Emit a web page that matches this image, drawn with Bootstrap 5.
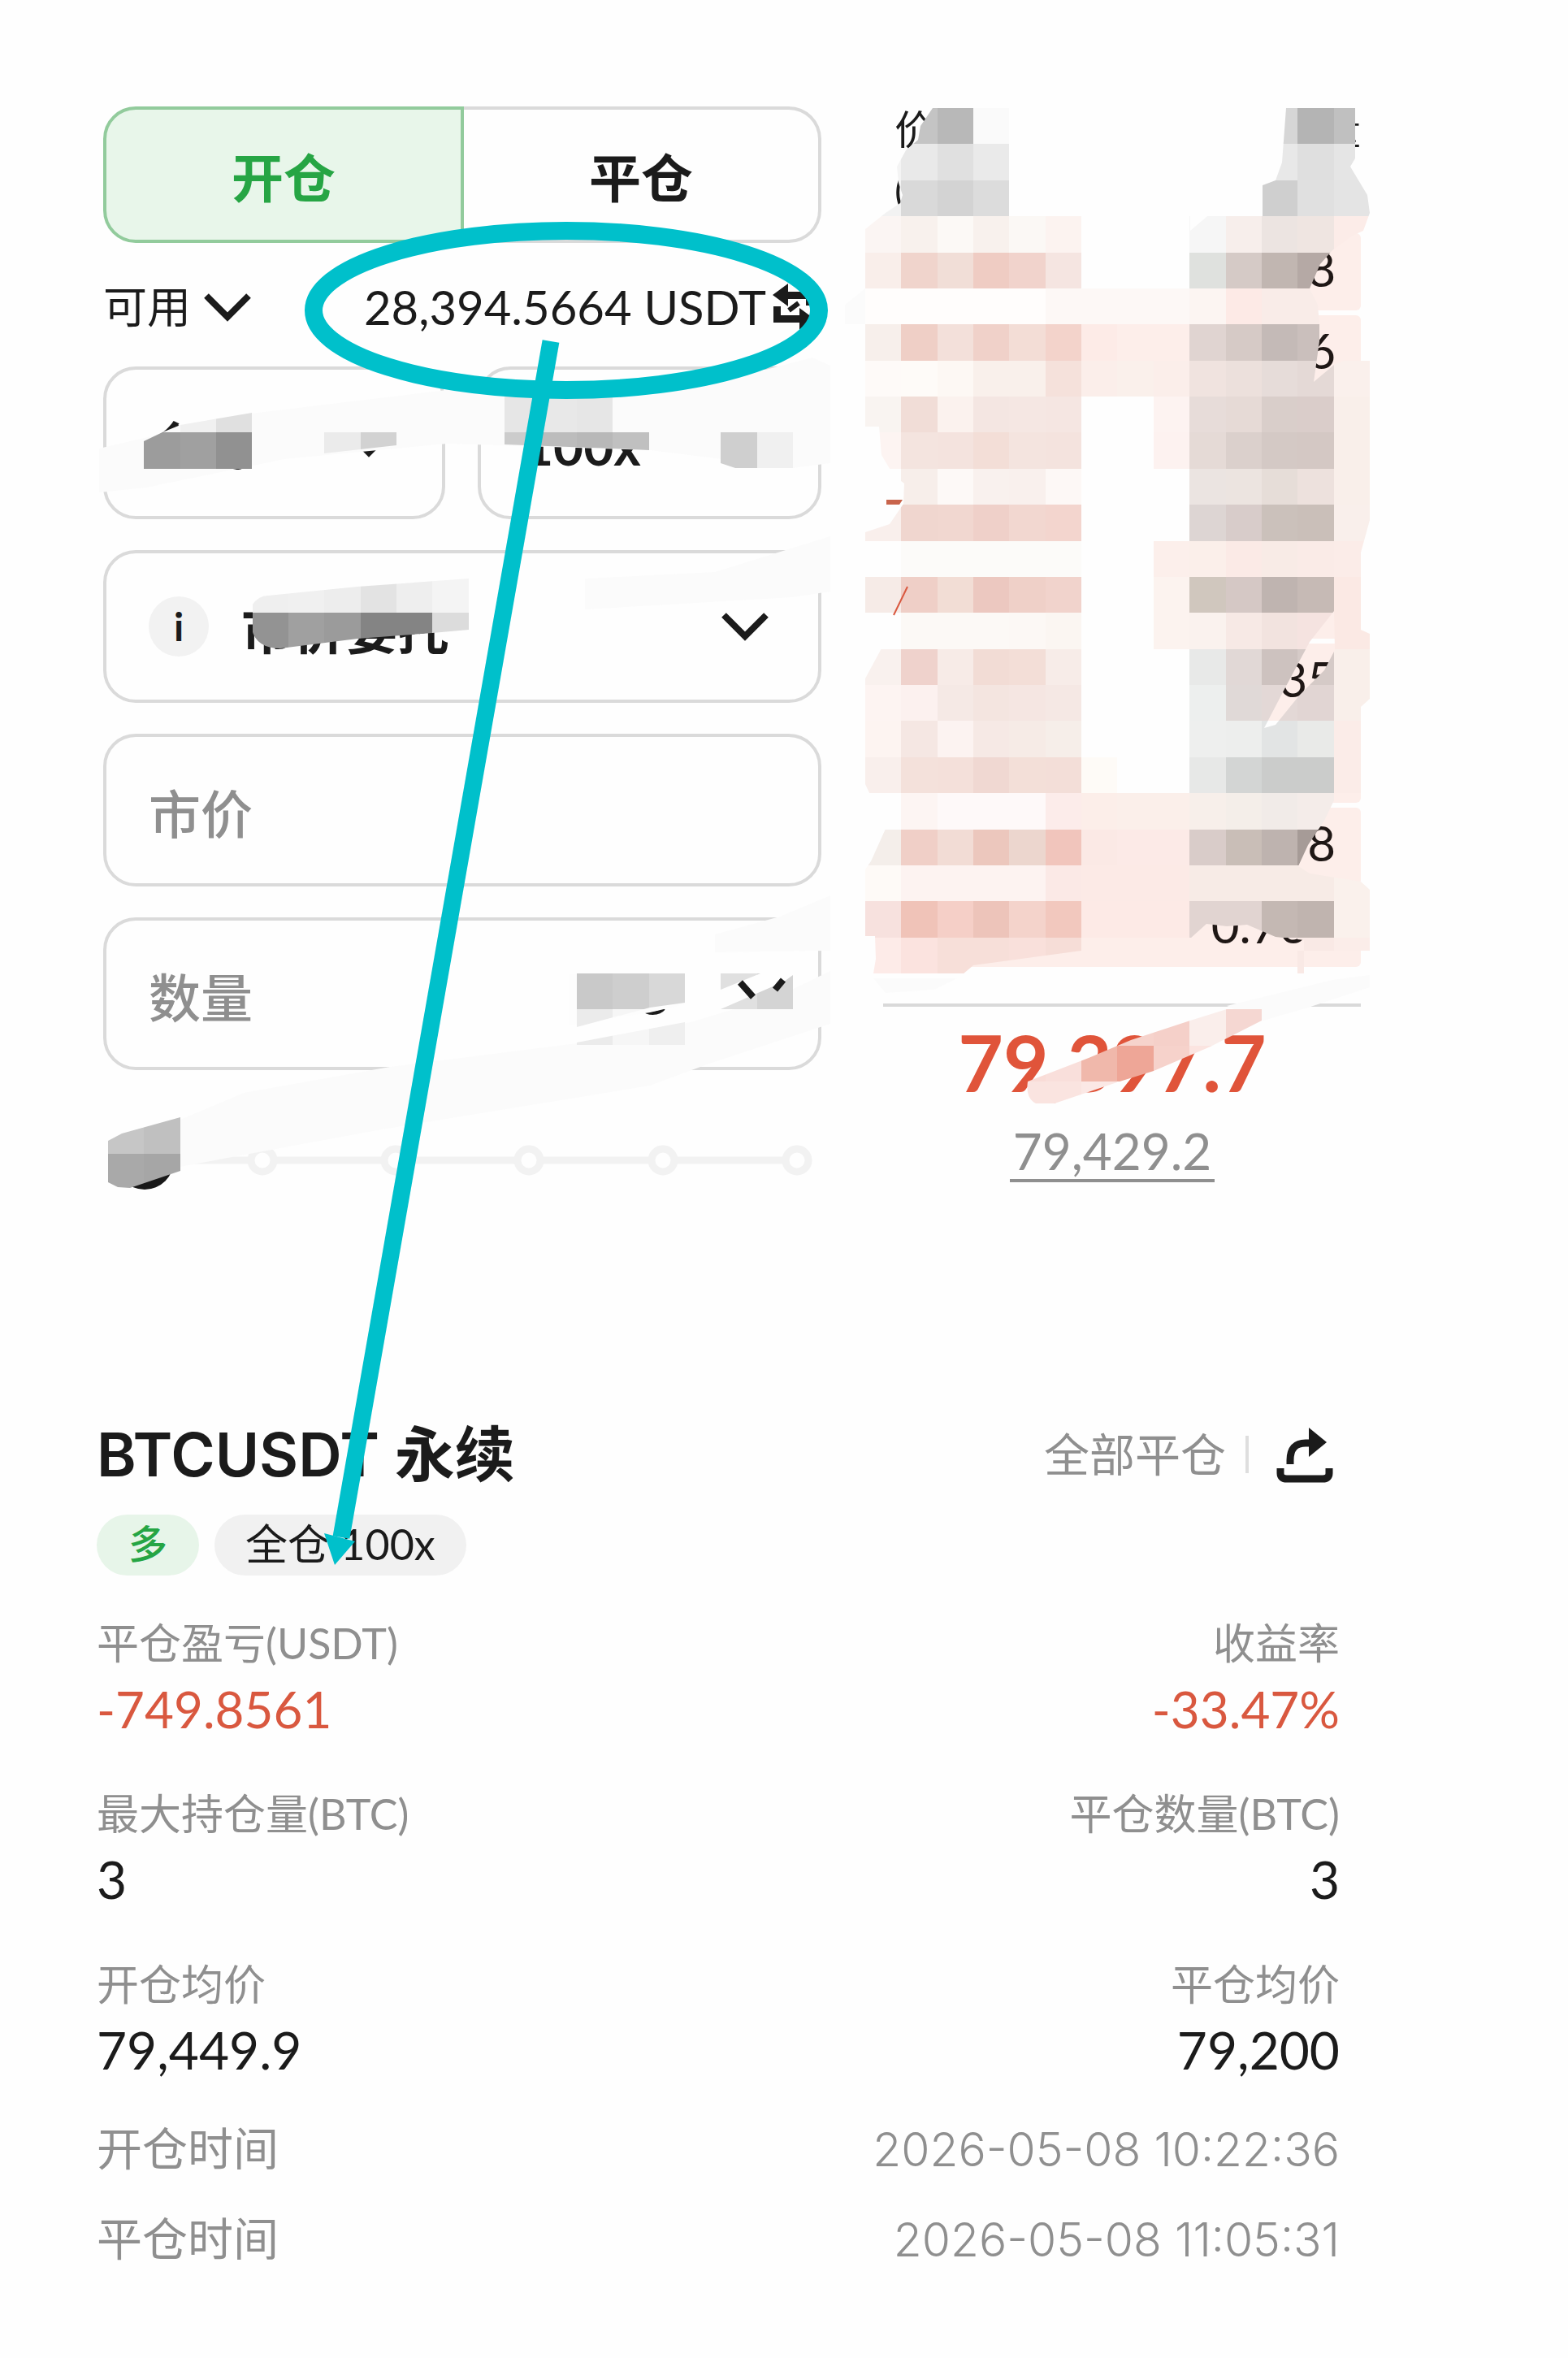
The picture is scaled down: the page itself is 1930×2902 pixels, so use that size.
<!DOCTYPE html>
<html lang="zh-CN">
<head>
<meta charset="utf-8">
<meta name="viewport" content="width=device-width, initial-scale=1">
<title>BTCUSDT 永续</title>
<link rel="stylesheet" href="https://cdn.jsdelivr.net/npm/bootstrap@5.3.0/dist/css/bootstrap.min.css">
<style>
  :root { --ink:#1b1b1b; --muted:#8f8f8f; --rule:#dadada; --down:#d9583f; --up:#26a544; --pen:#00c0cb; }
  body { font-family: Lato, "Noto Sans CJK SC", sans-serif; color: var(--ink); background: #fefefe; font-size: 52px; line-height: 72px; }
  .sheet { position: relative; overflow: hidden; padding-bottom: 91px; }
  .trade { display: grid; grid-template-columns: minmax(0, 884fr) minmax(0, 588fr); column-gap: 76px; padding: 131px 255px 0 127px; }
  .side-tabs { height: 168px; }
  .side-tabs .btn { border: 4px solid var(--rule); border-radius: 40px; font-size: 64px; font-weight: 700; line-height: 72px; color: var(--ink); background: transparent; flex: 1 1 0; padding: 8px 0 0; }
  .side-tabs .btn:first-child { border-radius: 40px 0 0 40px; border-color: #92cb9c; background: #e8f6ea; color: var(--up); }
  .side-tabs .btn:last-child { border-radius: 0 40px 40px 0; border-left: 0; }
  .avail { height: 152px; font-size: 54px; padding-top: 6px; }
  .avail .amount { font-size: 58px; }
  .plain { border: 0; background: none; padding: 0; color: inherit; font: inherit; line-height: 72px; }
  .stack { display: grid; grid-template-columns: minmax(0, 1fr); gap: 38px; }
  .pair { display: grid; grid-template-columns: minmax(0, 421fr) minmax(0, 423fr); gap: 40px; }
  .field { position: relative; display: flex; align-items: center; height: 188px; border: 4px solid var(--rule); border-radius: 40px; padding: 0 61px 0 52px; }
  .field select, .field input { appearance: none; border: 0; background: none; outline: 0; padding: 8px 0 0; flex: 1 1 0; min-width: 0; color: var(--ink); font-size: 64px; line-height: 90px; height: 98px; font-weight: 700; opacity: 1; }
  .field input::placeholder { color: var(--muted); opacity: 1; font-weight: 500; }
  .field .unit { flex: 0 0 auto; width: 132px; font-size: 58px; font-weight: 400; margin-right: 44px; }
  .field svg { flex: none; }
  .info-dot { width: 74px; height: 74px; border-radius: 50%; background: #f2f2f2; font: 700 48px/74px Lato, sans-serif; text-align: center; margin-right: 40px; flex: none; }
  .size-slider { position: relative; height: 72px; margin: 75px 12px 0 15px; }
  .size-slider svg { position: absolute; inset: 0; width: 100%; height: 72px; overflow: visible; }
  .size-slider input { appearance: none; position: relative; width: 100%; height: 72px; background: none; margin: 0; display: block; }
  .size-slider input::-webkit-slider-thumb { appearance: none; width: 72px; height: 72px; border-radius: 50%; background: #181818; }
  .book-table { width: 100%; border-collapse: separate; border-spacing: 0 6px; font-size: 60px; line-height: 87px; margin: 0; }
  .book-table td { padding: 0 0 8px; height: 95px; position: relative; }
  .book-table .qty { text-align: right; padding-right: 31px; color: #1f1715; }
  .depth { position: absolute; right: 0; top: 0; bottom: 0; background: #fdeeea; border-radius: 6px; }
  .book-table .qty span { position: relative; }
  .book-head { font-size: 50px; line-height: 75px; height: 159px; margin-top: -9px; padding-left: 14px; }
  .book-rule { height: 4px; background: #d9d9d9; margin: 39px 0 0; }
  .last-price { font-size: 96px; font-weight: 700; line-height: 100px; color: #e0543a; margin-top: 18px; }
  .mark-price { font-size: 62px; line-height: 70px; color: var(--muted); border-bottom: 4px solid var(--muted); padding: 0 4px; }
  .position { padding: 0 281px 0 119px; margin-top: 286px; }
  .position h1 { font-family: Inter, "Noto Sans CJK SC", sans-serif; font-size: 74px; font-weight: 600; line-height: 80px; margin: 0; }
  .close-all { font-size: 56px; color: var(--muted); }
  .vline { width: 4px; height: 46px; background: #dedede; margin: 0 34px 0 24px; }
  .chips { margin: 34px 0 47px; }
  .chip { height: 75px; border-radius: 38px; line-height: 72px; }
  .chip-long { padding: 0 39px; background: #e7f5e9; color: var(--up); font-size: 48px; font-weight: 500; margin-right: 19px; }
  .chip-mode { padding: 0 38px; background: #f1f1f1; font-size: 52px; }
  .stat { display: flex; justify-content: space-between; margin-bottom: 48px; }
  .stat > div:last-child { text-align: right; }
  .stat dt { font-weight: 400; color: var(--muted); }
  .stat dd { margin: 0; font-size: 64px; line-height: 90px; }
  .stat dd.loss { color: var(--down); font-size: 62px; }
  .times { margin-top: 20px; }
  .time-row { height: 111px; color: var(--muted); font-size: 56px; }
  .time-row time { font-family: Inter, Lato, sans-serif; font-weight: 300; font-size: 57px; padding-top: 4px; }
  .notes { position: absolute; left: 0; top: 0; width: 100%; pointer-events: none; }
</style>
<script src="https://cdn.jsdelivr.net/npm/bootstrap@5.3.0/dist/js/bootstrap.bundle.min.js"></script>
</head>
<body>
<main class="sheet">
  <section class="trade">
    <form>
      <div class="side-tabs d-flex">
        <button type="button" class="btn">开仓</button>
        <button type="button" class="btn">平仓</button>
      </div>
      <div class="avail d-flex align-items-center justify-content-between">
        <button type="button" class="plain d-flex align-items-center">可用
          <svg class="ms-3" width="58" height="36" viewBox="0 0 58 36" fill="none" stroke="#1b1b1b" stroke-width="8"><path d="M3 4l26 26L55 4"/></svg>
        </button>
        <div class="d-flex align-items-center">
          <span class="amount">28,394.5664 USDT</span>
          <button type="button" class="plain d-flex ms-2 me-2" aria-label="划转">
            <svg width="52" height="58" viewBox="0 0 52 58"><path fill="#1b1b1b" d="M0 14L19 0v10h31v17h-9V19H19v9zM52 44L33 58V48H1V28h9v11h23v-9z"/><path d="M20 33l12-9" stroke="#1b1b1b" stroke-width="6"/></svg>
          </button>
        </div>
      </div>
      <div class="stack">
        <div class="pair">
          <div class="field">
            <select aria-label="保证金模式"><option>全仓</option></select>
            <svg width="58" height="36" viewBox="0 0 58 36" fill="none" stroke="#1b1b1b" stroke-width="8"><path d="M3 4l26 26L55 4"/></svg>
          </div>
          <div class="field">
            <select aria-label="杠杆"><option>100x</option></select>
          </div>
        </div>
        <div class="field">
          <span class="info-dot">i</span>
          <select aria-label="委托类型"><option>市价委托</option></select>
          <svg width="58" height="36" viewBox="0 0 58 36" fill="none" stroke="#1b1b1b" stroke-width="8"><path d="M3 4l26 26L55 4"/></svg>
        </div>
        <div class="field"><input type="text" placeholder="市价" aria-label="价格"></div>
        <div class="field">
          <input type="text" placeholder="数量" aria-label="数量">
          <select class="unit" aria-label="单位"><option>BTC</option></select>
          <svg width="58" height="36" aria-hidden="true"></svg>
        </div>
      </div>
      <div class="size-slider">
        <svg viewBox="0 0 857 72" preserveAspectRatio="none"><path d="M36 36H823" stroke="#f2f2f2" stroke-width="9"/>
          <g fill="#fefefe" stroke="#f2f2f2" stroke-width="9"><circle cx="181" cy="36" r="14"/><circle cx="345" cy="36" r="14"/><circle cx="509" cy="36" r="14"/><circle cx="674" cy="36" r="14"/><circle cx="839" cy="36" r="14"/></g></svg>
        <input type="range" min="0" max="100" value="0" aria-label="仓位比例">
      </div>
    </form>

    <aside>
      <div class="book-head d-flex justify-content-between"><span>价<br>(</span><span>量</span></div>
      <table class="book-table">
        <tbody>
          <tr><td class="qty"><i class="depth" style="width:20%"></i><span>8</span></td></tr>
          <tr><td class="qty"><i class="depth" style="width:60%"></i><span>6</span></td></tr>
          <tr><td class="qty"><i class="depth" style="width:30%"></i></td></tr>
          <tr><td class="qty"><i class="depth" style="width:30%"></i></td></tr>
          <tr><td class="qty"><i class="depth" style="width:35%"></i></td></tr>
          <tr><td class="qty"><i class="depth" style="width:30%"></i><span>.35</span></td></tr>
          <tr><td class="qty"><i class="depth" style="width:15%"></i></td></tr>
          <tr><td class="qty"><i class="depth" style="width:70%"></i><span>98</span></td></tr>
          <tr><td class="qty"><i class="depth" style="width:100%"></i><span>0.768</span></td></tr>
        </tbody>
      </table>
      <div class="book-rule"></div>
      <div class="d-flex flex-column align-items-center me-4">
        <div class="last-price">79,397.7</div>
        <div class="mark-price mt-4">79,429.2</div>
      </div>
    </aside>
  </section>

  <section class="position">
    <header class="d-flex justify-content-between align-items-center">
      <h1>BTCUSDT 永续</h1>
      <div class="d-flex align-items-center">
        <button type="button" class="plain"><span class="close-all">全部平仓</span></button>
        <span class="vline"></span>
        <button type="button" class="plain d-flex me-2" aria-label="分享">
          <svg width="70" height="70" viewBox="0 0 70 70" fill="none" stroke="#1b1b1b"><path stroke-width="9" d="M17 47V42Q17 21 36 21H42"/><path fill="#1b1b1b" stroke="none" d="M40 2L62 20L40 38z"/><path stroke-width="9" d="M5 52V58Q5 65 13 65H57Q65 65 65 58V52"/></svg>
        </button>
      </div>
    </header>
    <div class="chips d-flex">
      <span class="chip chip-long">多</span><span class="chip chip-mode">全仓 100x</span>
    </div>
    <dl class="m-0">
      <div class="stat"><div><dt>平仓盈亏(USDT)</dt><dd class="loss">-749.8561</dd></div><div><dt>收益率</dt><dd class="loss">-33.47%</dd></div></div>
      <div class="stat"><div><dt>最大持仓量(BTC)</dt><dd>3</dd></div><div><dt>平仓数量(BTC)</dt><dd>3</dd></div></div>
      <div class="stat mb-0"><div><dt>开仓均价</dt><dd>79,449.9</dd></div><div><dt>平仓均价</dt><dd>79,200</dd></div></div>
    </dl>
    <div class="times">
      <div class="time-row d-flex justify-content-between align-items-center"><span>开仓时间</span><time>2026-05-08 10:22:36</time></div>
      <div class="time-row d-flex justify-content-between align-items-center"><span>平仓时间</span><time>2026-05-08 11:05:31</time></div>
    </div>
  </section>

  <!-- redaction mosaic and pen marks laid over the page -->
  <svg class="notes" viewBox="0 0 1930 2902" aria-hidden="true">
    <defs>
      <clipPath id="bookClip"><path clip-rule="evenodd" d="M1148 133L1133 155L1130 172L1115 185L1104 205L1106 225L1111 240L1108 250L1090 262L1065 282V525H1082L1085 560L1100 585L1113 595L1112 620L1095 645L1065 655V754H1098L1085 798L1065 835V965L1072 980L1105 985V1005L1090 1020L1072 1060L1065 1070V1152H1077L1078 1180L1075 1198V1205H1178L1198 1188L1331 1170H1686V1095L1675 1085V985H1642L1630 1010L1610 1040L1598 1066L1612 1075L1675 1085L1675 870L1686 860V780L1675 775V680L1686 640V433L1675 435L1642 449L1617 470L1624 420V399L1622 375L1612 355L1625 325L1640 308L1665 290L1678 284L1686 262L1683 240L1668 215L1662 205L1668 195V133H1583L1578 200L1570 222L1554 228V266H1486L1465 284V266H1331V133zM1642 752L1612 790L1580 850L1556 896L1570 892L1600 855L1630 825L1643 800zM1465 1155L1485 1137L1510 1140L1535 1138L1570 1153L1605 1157V1200H1465z"/></clipPath>
      <clipPath id="modeClip"><path d="M177 543L200 532L222 523L310 508V577H177zM399 532V558L488 548V532zM621 470H754V532H799V554L754 552L621 547zM887 532V570L905 576H976V532z"/></clipPath>
      <clipPath id="typeClip"><path d="M310 745Q318 733 330 733L440 722L577 712V775L532 779L440 786L345 798Q316 798 310 775z"/></clipPath>
      <clipPath id="unitClip"><path d="M710 1198H843V1234L800 1240L710 1264zM887 1198H936L887 1218zM887 1242L965 1208L976 1200V1242zM710 1283L843 1258V1286H710z"/></clipPath>
      <clipPath id="priceClip"><path d="M1265 1331L1340 1302L1392 1280L1465 1256L1510 1242H1555V1255L1490 1288L1420 1318L1375 1332L1298 1358H1275Q1262 1352 1265 1331z"/></clipPath>
      <clipPath id="thumbClip"><path d="M133 1404L150 1395L222 1375V1441L160 1462L145 1461L133 1455z"/></clipPath>
    </defs>
    <g fill="#fbfbfb">
      <path d="M122 552L300 510L550 480L900 466L1000 440L1022 450V570L976 576L800 554L550 546L350 565L180 600L122 606z"/>
      <path d="M720 712L880 704L1022 660V728L976 735L720 750z"/>
      <path d="M1022 1102L960 1128L880 1150V1172L1022 1170z"/>
      <path d="M1022 1195L960 1225L850 1258L710 1284L480 1313L300 1345L222 1378V1436L280 1425L470 1390L800 1336L870 1310L1022 1260z"/>
      <path d="M1686 1200L1640 1206L1510 1238L1555 1256L1610 1240L1686 1215z"/>
      <path d="M1040 375L1065 355H1331V399H1040zM1075 1204H1178L1150 1218L1090 1222z"/>
    </g>
    <path d="M700 1199H843V1236L800 1246L700 1262z" fill="#fdfdfd"/>
    <g id="mosaic" shape-rendering="crispEdges"></g>
    <path d="M911 1209L927 1227M954 1218L964 1206" stroke="#1b1b1b" stroke-width="8"/>
    <path d="M1091 615H1111L1107 621H1091z" fill="#c8644b"/>
    <path d="M1117 722L1100 757" stroke="#d9583f" stroke-width="2"/>
    <g fill="none" stroke="#00c0cb">
      <ellipse cx="697" cy="382" rx="311" ry="98" stroke-width="22"/>
      <path d="M678 420L420 1892" stroke-width="21"/>
    </g>
    <path d="M399 1887L437 1897L412 1926z" fill="#00c0cb"/>
  </svg>
</main>
<script>
  // Mosaic blocks sit on a 44.37px lattice; each line is: clip, row, first column, colours ("-" leaves a gap).
  const CELL = 44.37;
  const blocks = `
bookClip 3 25 c4c4c4 b8b8b8 fafafa - - - - - - - d6d6d6 b4b4b4 c0c0c0
bookClip 4 24 f4f4f4 e9e9e9 e0e0e0 eaeaea - - - - - - - e8e8e8 dfdfdf e5e5e5
bookClip 5 24 f2f2f2 d9d9d9 d3d3d3 dcdcdc - - - - - - - cfcfcf e0e0e0 e4e4e4
bookClip 6 24 fbf5f3 f8f1ed fcf9f6 f8f1ed fbf8f5 fcf3f0 - - - f6f6f6 f7eeeb ece4e1 efe5e1 fcece8
bookClip 7 24 f9eeea f0d4cc f1ded7 efccc3 f1d3cc f5e5e1 - - - dfe1de d5cac6 c1b6b1 b5a9a5 fdeeea
bookClip 8 24 fffdfc fffdfc fffdfc fffdfc fffdfc fdf8f6 fdf8f6 fdf8f6 fdf8f6 fcf5f2 fdeae6 f9ece8 f9ece8
bookClip 9 24 f7efeb efcfc6 f3e0da f0d1c9 f3ddd6 f3d3cb fdebe7 fdeeea fdeeea e0d4d1 d6cac6 c4bab7 cabfbc
bookClip 10 24 fefaf8 fefbf8 fdf8f4 f9f0eb f9f0eb f5e1db fbeeea faf0eb fbeeea f0e3df ece0dc e6dcd9 e4d9d6 faf0ec
bookClip 11 24 f9f4f1 f1ddd7 fbf2ee f4e6e2 f5e7e3 f5e6e2 - - fdf3f1 e7dcd9 e6dad6 d9ceca dacdca f9efea
bookClip 12 24 fdf4f2 f4e4df f4e3de f3ded7 f4e4df f4e3de - - fdf2f0 e5dad6 dbd0cc d4c9c5 d4c8c4 f9efea
bookClip 13 25 f7eeea fdf9f7 f9f1ee f9f0ed fdf8f6 - - - ebe4e1 ece4e0 e6ddd8 ede1dd f9efea
bookClip 14 24 f9efec f0d6cf f1d7d0 efd0c9 f2d7d0 f3d5ce - - - ddd5d3 d8ccca cbc1bb cabfb9 f9efeb
bookClip 15 25 fcfbf9 fcfbf9 fcfbf9 fcfbf9 fcfbf9 - - fcefeb fbefea fbeae6 f8ebe6 faebe7 fbece8
bookClip 16 24 f6ebe7 efcfc7 f2ddd5 ecc8c0 efd0c8 f1d3cc - - fcf3ef d0c7be d5c8c5 bfb4b0 c6bab5 fbe9e4
bookClip 17 25 fcf9f6 fcf9f6 fcf9f6 fcf8f5 fbf6f2 - - fcf3ef faf2ee f7e9e5 f2e3df f5e3e0 fbe9e4
bookClip 18 24 f9f1ee efd2cc f7ebe7 f2dcd5 f3ded7 f7ece8 - - - e8e9e8 e1d8d6 cdc2bf d5cac7 f9efea
bookClip 19 24 fdf4f2 fcf1ef f5e9e5 f4e5e0 f5e6e2 f5e8e4 - - - edefee e0d9d7 e3d8d6 e1d5d3 f9efea
bookClip 20 24 fdf4f1 f5e7e3 fcf3f1 f6e9e5 f6ebe6 f6eee9 - - - eeefee edeeed e2e4e4 e9eae8 fbece8
bookClip 21 24 f9efec f4e1db f4e0da f0d8d2 f3dfd8 f3ded8 fefbf7 - - e7e8e7 d3d5d4 cbcccb cbcccb fbece8
bookClip 22 25 fdf5f3 fef9f9 fef9f9 fef9f9 fcecea fceee9 fbefea fbefea f7efea f4eee9 f1ebe8 f4ece9
bookClip 23 24 f4eeea f0cfc7 f2dcd5 ecc7bd ecd6ce f1c5bc fbe9e5 fceae7 fceae7 d9ccc9 c9beb7 beb3af a69b97
bookClip 24 24 fefaf7 fdf3f1 fdf3f1 fdf3f1 fdf3f1 fbe9e6 fceae6 fceae6 fceae6 f7ebe6 f7ebe6 f7ebe6 f7ebe6 faf1ec
bookClip 25 24 f7e1de f0c3b8 f5cfc7 edc4ba f4d3cb f2c8be fdeae6 fdeae6 fdeae6 e1d4d1 e1d4d1 c4b8b3 c0b4af faf1ec
bookClip 26 24 fdebe8 fbe3df f7dfd9 f7dfd9 f9e0db f6ddd7 - - - - - - f9e9e5 fbede9
modeClip 11 4 fafafa f0f0f0 e0e0e0 - - - - - - - e6e6e6 e8e8e8 e6e6e6
modeClip 10 14 f0f0f0 f2f2f2 f0f0f0
modeClip 12 4 9c9c9c a0a0a0 919191 - - ebebeb d2d2d2 - - - cccccc bcbcbc b8b8b8 c0c0c0 - - cfcfcf f0f0f0
typeClip 16 7 efefef f0f0f0 ededed e3e3e3 eeeeee f4f4f4
typeClip 17 7 939393 a0a0a0 9b9b9b 848484 848484 dcdcdc
unitClip 27 16 c9c9c9 cecece d8d8d8 - e0e0e0 d4d4d4
unitClip 28 16 ebebeb f6f6f6 efefef
priceClip 28 28 fbe4e0 fbe4e0 fbe4e0 f6d3cc f5d0c9 faeeeb f5d7d2
priceClip 29 28 f9dcd7 f9dfdb f0b8ab eea697 f6d2cb fbe4e0 fbe4e0
priceClip 30 28 fae4e0 fae4e0 fbe8e5
thumbClip 31 3 c6c6c6 c0c0c0
thumbClip 32 3 a9a9a9 a6a6a6`.trim().split("\n");
  document.getElementById("mosaic").innerHTML = blocks.map(line => {
    const [clip, row, first, ...cols] = line.split(" ");
    const cells = cols.map((c, i) => c === "-" ? "" :
      `<rect x="${(+first + i) * CELL}" y="${row * CELL}" width="${CELL}" height="${CELL}" fill="#${c}"/>`).join("");
    return `<g clip-path="url(#${clip})">${cells}</g>`;
  }).join("");
</script>
</body>
</html>
